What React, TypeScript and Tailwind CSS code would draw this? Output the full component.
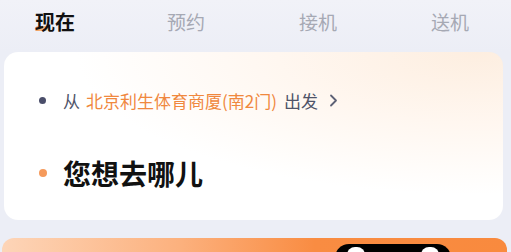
import React from 'react';

const tabs = ['现在', '预约', '接机', '送机'];

export default function App() {
    return (
        <div
            className="w-[511px] h-[252px] overflow-hidden bg-[#eceef6] flex flex-col"
            style={{ fontFamily: '"Noto Sans CJK SC", "Noto Sans", sans-serif' }}
        >
            {/* tab bar */}
            <div className="h-[52px] shrink-0 flex items-start pt-[11px] pl-[35px] bg-gradient-to-b from-[#f1f2f8] to-[#eceef6]">
                {tabs.map((t, i) => (
                    <div key={t} className="w-[132px] shrink-0 h-[21px] flex items-center">
                        {i === 0 ? (
                            <span className="relative text-[20px] font-bold text-[#111] leading-none">
                                <span className="absolute left-0 top-[14px] w-[13px] h-[5px] rounded-full -skew-x-12 bg-gradient-to-r from-[#f39a4f] to-[#f7c79a]" />
                                <span className="relative">{t}</span>
                            </span>
                        ) : (
                            <span className="text-[19px] text-[#a6a9b4] leading-none">{t}</span>
                        )}
                    </div>
                ))}
            </div>

            {/* address card */}
            <div className="ml-[4px] w-[499px] h-[168px] shrink-0 rounded-[14px] bg-white bg-[radial-gradient(ellipse_at_95%_0%,#fdeee0_0%,#fff7f0_30%,transparent_60%)] flex flex-col">
                <div className="h-[96px] flex items-center pl-[35px] pt-[1px]">
                    <span className="w-[7px] h-[7px] rounded-full bg-[#4a4e6a]" />
                    <span className="ml-[17px] text-[17px] text-[#4f5469]">从</span>
                    <span className="ml-[6px] text-[17px] text-[#f0883e]">北京利生体育商厦(南2门)</span>
                    <span className="ml-[7px] text-[17px] text-[#4f5469]">出发</span>
                    <svg className="ml-[11px]" width="9" height="13" viewBox="0 0 9 13" fill="none">
                        <path d="M2 1.5 L7 6.5 L2 11.5" stroke="#5d6175" strokeWidth="1.8" strokeLinecap="round" strokeLinejoin="round" />
                    </svg>
                </div>
                <div className="h-[50px] flex items-center pl-[35px]">
                    <span className="w-[8px] h-[8px] rounded-full bg-[#f59a5b]" />
                    <span className="ml-[16px] text-[28px] font-bold text-[#111] leading-none">您想去哪儿</span>
                </div>
            </div>

            {/* bottom orange bar */}
            <div className="mt-[18px] ml-[2px] w-[505px] flex-1 rounded-t-[12px] bg-[linear-gradient(90deg,#fdd5b8_0%,#fcb17e_35%,#f98c42_62%,#f98a3e_100%)] pl-[333px] pt-[6px]">
                <div className="w-[116px] h-[20px] rounded-t-[14px] bg-black flex pt-[3px] px-[12px] justify-between">
                    <div className="w-[18px] h-[16px] rounded-t-[8px] bg-white" />
                    <div className="w-[18px] h-[16px] rounded-t-[8px] bg-white" />
                </div>
            </div>
        </div>
    );
}
